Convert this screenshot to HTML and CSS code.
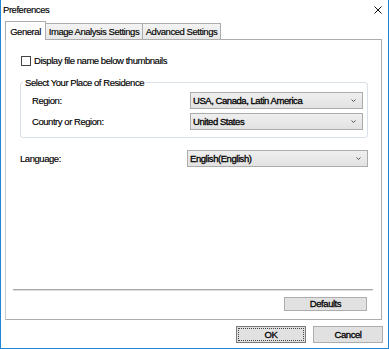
FILE: index.html
```html
<html>
  <head>
    <link rel="stylesheet" href="styles.css">
    <title>Preferences</title>
  </head>
  <body>
    <div class="window">
      <div class="titlebar">
        <span>Preferences</span>
        <svg class="close" width="8" height="8" viewBox="0 0 8 8">
          <path d="M0.5 0.5 L7.5 7.5 M7.5 0.5 L0.5 7.5" stroke="#111" stroke-width="1" fill="none"/>
        </svg>
      </div>
      <div class="tabs">
        <div class="tab tab-active">General</div>
        <div class="tab tab-image">Image Analysis Settings</div>
        <div class="tab tab-advanced">Advanced Settings</div>
      </div>
      <div class="panel">
        <div class="check-row"><span class="checkbox"></span>Display file name below thumbnails</div>
        <fieldset class="group">
          <legend>Select Your Place of Residence</legend>
          <div class="field-row">
            <span>Region:</span>
            <div class="combo combo-narrow">
              <span>USA, Canada, Latin America</span>
              <svg class="chevron" width="5" height="3" viewBox="0 0 5 3"><polyline points="0.5,0.5 2.5,2.5 4.5,0.5" stroke="#555" fill="none"/></svg>
            </div>
          </div>
          <div class="field-row">
            <span>Country or Region:</span>
            <div class="combo combo-narrow">
              <span>United States</span>
              <svg class="chevron" width="5" height="3" viewBox="0 0 5 3"><polyline points="0.5,0.5 2.5,2.5 4.5,0.5" stroke="#555" fill="none"/></svg>
            </div>
          </div>
        </fieldset>
        <div class="field-row lang-row">
          <span>Language:</span>
          <div class="combo combo-wide">
            <span>English(English)</span>
            <svg class="chevron" width="5" height="3" viewBox="0 0 5 3"><polyline points="0.5,0.5 2.5,2.5 4.5,0.5" stroke="#555" fill="none"/></svg>
          </div>
        </div>
        <div class="spacer"></div>
        <div class="separator"></div>
        <div class="defaults-row">
          <button class="btn btn-defaults">Defaults</button>
        </div>
      </div>
      <div class="footer">
        <button class="btn btn-ok">OK</button>
        <button class="btn">Cancel</button>
      </div>
    </div>
  </body>
</html>
```
FILE: styles.css
```css
* {
  box-sizing: border-box;
}
body {
  margin: 0;
  font-family: "Liberation Sans", Arial, sans-serif;
  font-size: 9.5px;
  letter-spacing: -0.45px;
  color: #000;
  background: #fff;
  -webkit-text-stroke: 0.15px #000;
}
.window {
  width: 389px;
  height: 349px;
  border: 1px solid #1f86d6;
  border-top: none;
  padding-bottom: 5px;
  display: flex;
  flex-direction: column;
  background: #fff;
}
.titlebar {
  height: 21px;
  display: flex;
  justify-content: space-between;
  align-items: flex-start;
  padding: 4px 6px 0 2px;
  line-height: 11px;
}
.close {
  margin-top: 2px;
}
.tabs {
  height: 19px;
  display: flex;
  align-items: flex-end;
  margin: 0 0 -1px 4px;
  position: relative;
  z-index: 1;
}
.tab {
  display: flex;
  align-items: center;
  justify-content: center;
  border: 1px solid #acacac;
  border-bottom: none;
  white-space: nowrap;
}
.tab-active {
  width: 41px;
  height: 19px;
  background: #fff;
}
.tab-image,
.tab-advanced {
  height: 16px;
  margin-bottom: 1px;
  border-left: none;
  background: linear-gradient(#f3f3f3, #e7e7e7);
}
.tab-image {
  width: 97px;
}
.tab-advanced {
  width: 78px;
}
.panel {
  height: 281px;
  margin: 0 6px 0 4px;
  border: 1px solid #acacac;
  border-left-color: #cdcdcd;
  padding: 15px 13px 8px 14px;
  display: flex;
  flex-direction: column;
}
.check-row {
  height: 11px;
  line-height: 11px;
  display: flex;
  align-items: center;
}
.checkbox {
  width: 10px;
  height: 10px;
  margin: 0 3px 0 1px;
  border: 1px solid #444;
  background: #fff;
}
.group {
  margin: 11px 0 0;
  padding: 4px 4px 7px 11px;
  min-width: 0;
  border: 1px solid #dae0e7;
  border-radius: 3px;
  display: flex;
  flex-direction: column;
  gap: 4px;
}
.group legend {
  padding: 0 2px;
  margin-left: -9px;
  line-height: 11px;
}
.field-row {
  height: 17px;
  display: flex;
  align-items: center;
  justify-content: space-between;
}
.lang-row {
  margin-top: 12px;
}
.combo {
  height: 17px;
  display: flex;
  align-items: center;
  justify-content: space-between;
  padding: 0 6px 0 2px;
  border: 1px solid #acacac;
  background: linear-gradient(#efefef, #e2e2e2);
  -webkit-text-stroke: 0.3px #000;
}
.combo-narrow {
  width: 173px;
}
.combo-wide {
  width: 181px;
}
.spacer {
  flex: 1;
}
.separator {
  height: 2px;
  margin: 0 -5px 6px -7px;
  border-top: 1px solid #a9a9a9;
  border-bottom: 1px solid #dedede;
}
.defaults-row {
  display: flex;
  justify-content: flex-end;
  padding-right: 1px;
}
.btn {
  font: inherit;
  letter-spacing: inherit;
  color: #000;
  height: 14px;
  padding: 0;
  line-height: 12px;
  border: 1px solid #adadad;
  background: #e1e1e1;
  -webkit-text-stroke: 0.3px #000;
}
.btn-defaults {
  width: 83px;
}
.footer {
  display: flex;
  justify-content: flex-end;
  gap: 7px;
  margin-top: 6px;
  padding-right: 5px;
}
.footer .btn {
  width: 70px;
  height: 17px;
}
.btn-ok {
  border-color: #7a7a7a;
  outline: 1px dotted #444;
  outline-offset: -3px;
}
```
